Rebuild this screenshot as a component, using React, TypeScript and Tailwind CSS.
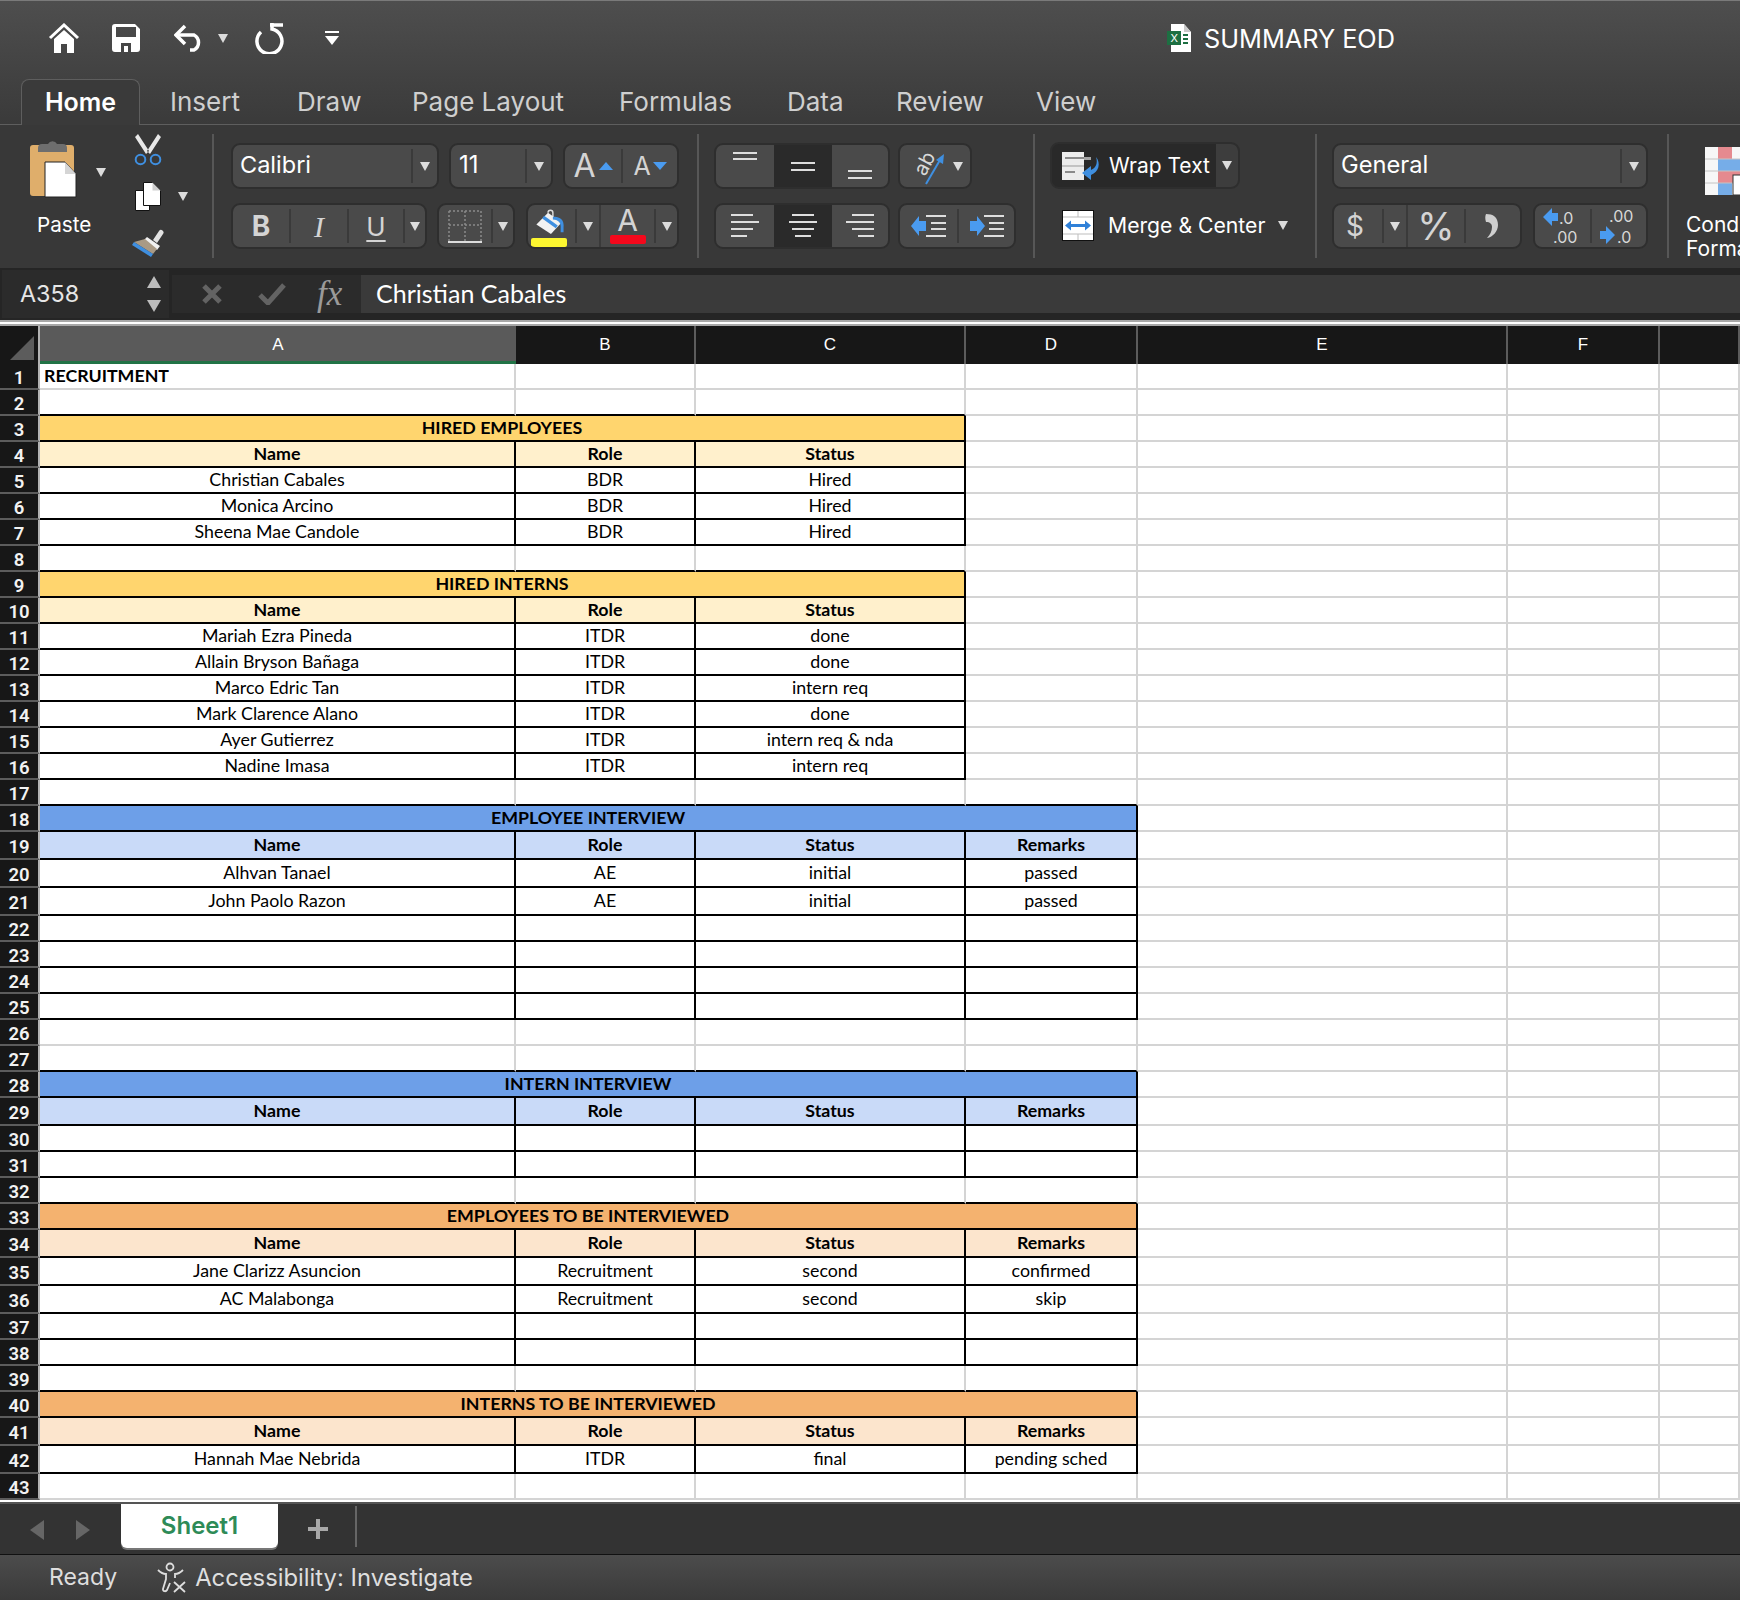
import type { ReactNode } from "react";

const UI = "font-['Inter',sans-serif]";

type Row = {
  n: number;
  tall?: boolean;
  kind: "blank" | "title" | "head" | "body";
  span?: number;
  bg?: string;
  cells?: string[];
  lead?: string;
};

const YELLOW = "bg-[#ffd56e]";
const YELLOW_LT = "bg-[#fff0cc]";
const BLUE = "bg-[#6d9fe8]";
const BLUE_LT = "bg-[#c9daf8]";
const ORANGE = "bg-[#f4b26f]";
const ORANGE_LT = "bg-[#fce5cd]";

const HEAD3 = ["Name", "Role", "Status"];
const HEAD4 = ["Name", "Role", "Status", "Remarks"];
const EMPTY4 = ["", "", "", ""];

const rows: Row[] = [
  { n: 1, kind: "blank", lead: "RECRUITMENT" },
  { n: 2, kind: "blank", span: 3 },
  { n: 3, kind: "title", span: 3, bg: YELLOW, cells: ["HIRED EMPLOYEES"] },
  { n: 4, kind: "head", span: 3, bg: YELLOW_LT, cells: HEAD3 },
  { n: 5, kind: "body", span: 3, cells: ["Christian Cabales", "BDR", "Hired"] },
  { n: 6, kind: "body", span: 3, cells: ["Monica Arcino", "BDR", "Hired"] },
  { n: 7, kind: "body", span: 3, cells: ["Sheena Mae Candole", "BDR", "Hired"] },
  { n: 8, kind: "blank", span: 3 },
  { n: 9, kind: "title", span: 3, bg: YELLOW, cells: ["HIRED INTERNS"] },
  { n: 10, kind: "head", span: 3, bg: YELLOW_LT, cells: HEAD3 },
  { n: 11, kind: "body", span: 3, cells: ["Mariah Ezra Pineda", "ITDR", "done"] },
  { n: 12, kind: "body", span: 3, cells: ["Allain Bryson Bañaga", "ITDR", "done"] },
  { n: 13, kind: "body", span: 3, cells: ["Marco Edric Tan", "ITDR", "intern req"] },
  { n: 14, kind: "body", span: 3, cells: ["Mark Clarence Alano", "ITDR", "done"] },
  { n: 15, kind: "body", span: 3, cells: ["Ayer Gutierrez", "ITDR", "intern req & nda"] },
  { n: 16, kind: "body", span: 3, cells: ["Nadine Imasa", "ITDR", "intern req"] },
  { n: 17, kind: "blank", span: 4 },
  { n: 18, kind: "title", span: 4, bg: BLUE, cells: ["EMPLOYEE INTERVIEW"] },
  { n: 19, tall: true, kind: "head", span: 4, bg: BLUE_LT, cells: HEAD4 },
  { n: 20, tall: true, kind: "body", span: 4, cells: ["Alhvan Tanael", "AE", "initial", "passed"] },
  { n: 21, tall: true, kind: "body", span: 4, cells: ["John Paolo Razon", "AE", "initial", "passed"] },
  { n: 22, kind: "body", span: 4, cells: EMPTY4 },
  { n: 23, kind: "body", span: 4, cells: EMPTY4 },
  { n: 24, kind: "body", span: 4, cells: EMPTY4 },
  { n: 25, kind: "body", span: 4, cells: EMPTY4 },
  { n: 26, kind: "blank" },
  { n: 27, kind: "blank", span: 4 },
  { n: 28, kind: "title", span: 4, bg: BLUE, cells: ["INTERN INTERVIEW"] },
  { n: 29, tall: true, kind: "head", span: 4, bg: BLUE_LT, cells: HEAD4 },
  { n: 30, kind: "body", span: 4, cells: EMPTY4 },
  { n: 31, kind: "body", span: 4, cells: EMPTY4 },
  { n: 32, kind: "blank", span: 4 },
  { n: 33, kind: "title", span: 4, bg: ORANGE, cells: ["EMPLOYEES TO BE INTERVIEWED"] },
  { n: 34, tall: true, kind: "head", span: 4, bg: ORANGE_LT, cells: HEAD4 },
  { n: 35, tall: true, kind: "body", span: 4, cells: ["Jane Clarizz Asuncion", "Recruitment", "second", "confirmed"] },
  { n: 36, tall: true, kind: "body", span: 4, cells: ["AC Malabonga", "Recruitment", "second", "skip"] },
  { n: 37, kind: "body", span: 4, cells: EMPTY4 },
  { n: 38, kind: "body", span: 4, cells: EMPTY4 },
  { n: 39, kind: "blank", span: 4 },
  { n: 40, kind: "title", span: 4, bg: ORANGE, cells: ["INTERNS TO BE INTERVIEWED"] },
  { n: 41, tall: true, kind: "head", span: 4, bg: ORANGE_LT, cells: HEAD4 },
  { n: 42, tall: true, kind: "body", span: 4, cells: ["Hannah Mae Nebrida", "ITDR", "final", "pending sched"] },
  { n: 43, kind: "blank" },
];

const GRID = "grid grid-cols-[40px_476px_180px_270px_172px_370px_152px_80px]";

const Caret = ({ className = "" }: { className?: string }) => (
  <svg width="10" height="9" viewBox="0 0 10 9" className={className}>
    <path d="M0 0h10L5 9z" fill="#dcdcdc" />
  </svg>
);

const Divider = () => <div className="h-[34px] w-[2px] shrink-0 bg-[#3a3a3a]" />;

const Box = ({ className = "", children }: { className?: string; children: ReactNode }) => (
  <div className={`flex h-[46px] shrink-0 items-center overflow-hidden rounded-[9px] border-2 border-[#2e2e2e] bg-[#4a4a4a] ${className}`}>
    {children}
  </div>
);

const Seg = ({ className = "", children }: { className?: string; children?: ReactNode }) => (
  <div className={`flex h-full shrink-0 items-center justify-center ${className}`}>{children}</div>
);

const Separator = () => <div className="mt-[9px] h-[124px] w-[2px] shrink-0 bg-[#575757]" />;

const Lines = ({ items }: { items: [number, number, number][] }) => (
  <svg width="36" height="36" viewBox="0 0 36 36">
    {items.map(([x, y, w], i) => (
      <rect key={i} x={x} y={y} width={w} height="2" fill="#dedede" />
    ))}
  </svg>
);

const HomeIcon = () => (
  <svg width="32" height="30" viewBox="0 0 32 30">
    <path d="M2 15 16 2l14 13" fill="none" stroke="#fff" strokeWidth="3" />
    <path d="M6 16 16 7l10 9v14h-7v-9h-6v9H6z" fill="#fff" />
  </svg>
);

const SaveIcon = () => (
  <svg width="28" height="28" viewBox="0 0 28 28">
    <path fillRule="evenodd" d="M3 0h20l5 5v20a3 3 0 0 1-3 3H3a3 3 0 0 1-3-3V3a3 3 0 0 1 3-3zM4 3v10h20V3zM9 19v9h10v-9zM12 22h4v6h-4z" fill="#fff" />
  </svg>
);

const UndoIcon = () => (
  <svg width="31" height="28" viewBox="0 0 31 28" fill="none" stroke="#fff" strokeWidth="3.500">
    <path d="M11 2 2 11l9 9" />
    <path d="M3 11h17a8.500 8.500 0 0 1 0 15h-4" />
  </svg>
);

const RedoIcon = () => (
  <svg width="30" height="31" viewBox="0 0 30 31" fill="none" stroke="#fff" strokeWidth="3.500">
    <path d="M7 9a12.500 12.500 0 1 0 11-3V0" />
    <path d="M16 2h13" />
  </svg>
);

const CustomizeIcon = () => (
  <svg width="14" height="14" viewBox="0 0 14 14">
    <rect width="14" height="2" fill="#fff" />
    <path d="M0 5h14L7 14z" fill="#fff" />
  </svg>
);

const ExcelFile = () => (
  <svg width="25" height="28" viewBox="0 0 25 28">
    <path d="M4 0h13l7 8v20H4z" fill="#fff" />
    <path d="M17 0v8h7z" fill="#c9c9c9" />
    <rect y="7" width="14" height="14" fill="#1d6f42" />
    <text x="3.500" y="18" fontSize="11" fill="#fff" fontFamily="Inter">X</text>
    <path d="M16 10h5v2h-5zM16 14h5v2h-5zM16 18h5v2h-5z" fill="#1d6f42" />
  </svg>
);

const PasteIcon = () => (
  <svg width="47" height="58" viewBox="0 0 47 58" className="block">
    <rect y="5" width="44" height="51" rx="3" fill="#dfae6b" />
    <path d="M8 8a4 4 0 0 1 4-4h6a5 5 0 0 1 9 0h6a4 4 0 0 1 4 4v4H8z" fill="#6e6e6e" />
    <path d="M15 22h20l11 12v23H15z" fill="#fff" stroke="#222" strokeWidth="1" />
    <path d="M35 22v12h11z" fill="#d5d5d5" />
  </svg>
);

const CutIcon = () => (
  <svg width="28" height="32" viewBox="0 0 28 32" className="block">
    <path d="M4 0 15 17l-3 3L1 3zM24 0 13 17l3 3L27 3z" fill="#e8e8e8" />
    <circle cx="6.500" cy="25.500" r="4.800" fill="none" stroke="#3f8fe0" strokeWidth="2" />
    <circle cx="21.500" cy="25.500" r="4.800" fill="none" stroke="#3f8fe0" strokeWidth="2" />
  </svg>
);

const CopyIcon = () => (
  <svg width="26" height="29" viewBox="0 0 26 29" className="block">
    <path d="M.5 8.500h14v20H.5z" fill="#fff" stroke="#111" />
    <path d="M8.500.5h9l8 8v15h-17z" fill="#fff" stroke="#111" />
    <path d="M17.500.5v8h8z" fill="#cfcfcf" />
  </svg>
);

const BrushIcon = () => (
  <svg width="32" height="28" viewBox="0 0 32 28" className="block">
    <path d="M21 11 27 2a2.500 2.500 0 0 1 4 3l-6 9z" fill="#e2e2e2" />
    <path d="m15 8 13 9-3 4-13-10z" fill="#f1f1f1" />
    <path d="M13 10 25 20l-4 5L2 13z" fill="#a99a85" />
    <path d="M2 13 21 25l-2 3L0 16z" fill="#3f8fe0" />
  </svg>
);

const FillIcon = () => (
  <svg width="36" height="34" viewBox="0 0 36 34">
    <path d="M17 8a2.500 2.500 0 0 1 5 0v6" fill="none" stroke="#dcdcdc" strokeWidth="1.500" />
    <path d="M17 8 31 18 20 30 5 20z" fill="#f2f2f2" />
    <path d="M13 11 27 21l-2 3-14-10z" fill="#3f8fe0" />
    <path d="M22 12c7 0 12 2 11 12v4h-3v-6c0-4-3-7-8-7z" fill="#3f8fe0" />
  </svg>
);

const OrientationIcon = () => (
  <svg width="34" height="40" viewBox="0 0 34 40" className="overflow-visible">
    <text transform="translate(13 31) rotate(-62)" fontSize="20" fill="#d8d8d8" fontFamily="Inter">ab</text>
    <path d="m14 38 14-24" stroke="#3f8fe0" strokeWidth="2" />
    <path d="m32 8-1 10-7-4z" fill="#3f8fe0" />
  </svg>
);

const IndentIcon = ({ dir }: { dir: "left" | "right" }) => (
  <svg width="36" height="30" viewBox="0 0 36 30">
    <path d={dir === "left" ? "M0 15 8 5v5h7v10H8v5z" : "M16 15 8 5v5H1v10h7v5z"} fill="#4a9bf0" />
    <path d="M15 4h20v2H15zM20 11h15v2H20zM20 17h15v2H20zM15 24h20v2H15z" fill="#dedede" />
  </svg>
);

const WrapIcon = () => (
  <svg width="40" height="32" viewBox="0 0 40 32">
    <rect y="2" width="22" height="28" fill="#ececec" />
    <path d="M0 16h22" stroke="#999" strokeWidth="1" />
    <path d="M3 7h20v2H3zM3 21h10v2H3z" fill="#8a8a8a" />
    <rect x="22" y="7" width="7" height="3" fill="#a5a5a5" />
    <path d="M34 7c5 6 3 15-5 18v5l-9-7 9-7v4c5-2 7-7 5-13z" fill="#3f8fe0" />
  </svg>
);

const MergeIcon = () => (
  <svg width="32" height="31" viewBox="0 0 32 31">
    <rect x=".5" y=".5" width="31" height="30" fill="#fff" stroke="#111" />
    <path d="M16 1v6M16 24v6M1 7h30M1 24h30" stroke="#bdbdbd" />
    <path d="m3 15.500 6-5v3.500h14v-3.500l6 5-6 5V17H9v3.500z" fill="#2f80d8" />
  </svg>
);

const DecimalLeft = () => (
  <svg width="44" height="42" viewBox="0 0 44 42" fontFamily="Inter" fontSize="16" fill="#d8d8d8">
    <path d="M2 12 11 3v5h6v8h-6v5z" fill="#4a9bf0" />
    <text x="18" y="19">.0</text>
    <text x="12" y="38">.00</text>
  </svg>
);

const DecimalRight = () => (
  <svg width="44" height="42" viewBox="0 0 44 42" fontFamily="Inter" fontSize="16" fill="#d8d8d8">
    <text x="12" y="17">.00</text>
    <path d="M18 30 9 21v5H3v8h6v5z" fill="#4a9bf0" />
    <text x="20" y="38">.0</text>
  </svg>
);

const CommaIcon = () => (
  <svg width="14" height="26" viewBox="0 0 14 26">
    <path d="M1 1c7 0 12 3 12 11 0 6-5 12-11 13 3-3 5-7 5-11 0-3-2-5-6-5-1-3-1-6 0-8z" fill="#cfcfcf" />
  </svg>
);

const ConditionalIcon = () => (
  <svg width="40" height="48" viewBox="0 0 40 48" className="block">
    <rect width="40" height="48" fill="#f7f7f7" />
    <rect x="13" width="14" height="12" fill="#e58a8f" />
    <rect x="13" y="12" width="27" height="12" fill="#76ade8" />
    <rect x="13" y="24" width="27" height="12" fill="#e58a8f" />
    <rect x="13" y="36" width="14" height="12" fill="#76ade8" />
    <path d="M0 12h40M0 24h40M0 36h40" stroke="#c4c4c4" />
    <rect x="28" y="28" width="12" height="20" fill="#fff" stroke="#333" />
  </svg>
);

const AccessibilityIcon = () => (
  <svg width="30" height="31" viewBox="0 0 30 31" fill="none" stroke="#dedede" strokeWidth="1.800" className="shrink-0">
    <circle cx="13" cy="5" r="3.500" />
    <path d="M1 8c3 3 6 4 8 4v5l-3 10c-.5 2.500 3 3 4 1l3-7" />
    <path d="M26 8c-3 3-6 4-8 4v4" />
    <path d="m17 20 11 10M28 20 17 30" />
  </svg>
);

const Cell = ({ className = "", children }: { className?: string; children?: ReactNode }) => (
  <div className={`flex items-center overflow-hidden border-r-2 border-b-2 text-[17.800px] leading-none text-black ${className}`}>
    {children}
  </div>
);

const SheetRow = ({ row }: { row: Row }) => {
  const h = row.tall ? "h-[28px]" : "h-[26px]";
  const span = row.span ?? 0;
  const rest = [0, 1, 2, 3, 4, 5, 6].slice(row.kind === "blank" ? 0 : span);

  return (
    <div className={`${GRID} ${h}`}>
      <div className="flex items-center justify-center overflow-hidden border-r-2 border-b-2 border-r-[#b4b4b4] border-b-[#5c5c5c] bg-[#171717] pt-[4px] font-['Roboto',sans-serif] text-[18.500px] leading-none font-semibold text-[#f2f2f2]">
        {row.n}
      </div>

      {row.kind === "title" && (
        <Cell className={`justify-center border-black text-[17.200px] font-bold ${row.bg} ${span === 3 ? "col-span-3" : "col-span-4"}`}>
          {row.cells?.[0]}
        </Cell>
      )}

      {(row.kind === "head" || row.kind === "body") &&
        row.cells?.map((c, i) => (
          <Cell
            key={i}
            className={`justify-center border-black ${row.kind === "head" ? `font-bold ${row.bg}` : "bg-white"}`}
          >
            {c}
          </Cell>
        ))}

      {rest.map((i) => {
        const edge = row.kind === "blank" && i < span;
        return (
          <Cell
            key={i}
            className={`border-r-[#d4d4d4] bg-white ${edge ? "border-b-black" : "border-b-[#d4d4d4]"}`}
          >
            {i === 0 && row.lead && <span className="pl-[4px] font-bold">{row.lead}</span>}
          </Cell>
        );
      })}
    </div>
  );
};

const ColHead = ({ label, active }: { label: string; active?: boolean }) => (
  <div
    className={`flex h-[38px] items-center justify-center font-['Liberation_Sans',sans-serif] text-[17px] text-white ${
      active ? "border-b-[3px] border-b-[#217346] bg-[#5a5a5a] pt-[2px]" : "border-r-2 border-r-[#5c5c5c] bg-[#171717]"
    }`}
  >
    {label}
  </div>
);

export default function App() {
  return (
    <div className={`h-[1600px] w-[1740px] overflow-hidden bg-[#383838] ${UI}`}>
      <div className="h-[125px] border-t border-t-[#7a7a7a] bg-gradient-to-b from-[#4e4e4e] to-[#3a3a3a]">
        <div className="flex h-[78px] items-center pl-[48px] pb-[4px]">
          <HomeIcon />
          <div className="ml-[32px]"><SaveIcon /></div>
          <div className="ml-[34px]"><UndoIcon /></div>
          <Caret className="ml-[13px]" />
          <div className="ml-[26px]"><RedoIcon /></div>
          <div className="ml-[41px]"><CustomizeIcon /></div>
          <div className="ml-[828px]"><ExcelFile /></div>
          <span className="ml-[12px] pt-[2px] text-[25.300px] text-white">SUMMARY EOD</span>
        </div>
        <div className="flex h-[46px] border-b border-b-[#5e5e5e] pl-[21px] text-[26px] text-[#cfcfcf]">
          <div className="-mb-px flex w-[119px] items-center justify-center rounded-t-lg border border-b-0 border-[#5e5e5e] bg-[#3a3a3a] text-[25px] font-semibold text-white">Home</div>
          <div className="ml-[30px] flex w-[127px] items-center">Insert</div>
          <div className="flex w-[115px] items-center">Draw</div>
          <div className="flex w-[207px] items-center">Page Layout</div>
          <div className="flex w-[168px] items-center">Formulas</div>
          <div className="flex w-[109px] items-center">Data</div>
          <div className="flex w-[140px] items-center">Review</div>
          <div className="flex items-center">View</div>
        </div>
      </div>

      <div className="flex h-[143px] items-start bg-[#383838] text-[#d4d4d4]">
        <div className="flex w-[212px] shrink-0">
          <div className="ml-[30px] w-[66px] pt-[15px]">
            <PasteIcon />
            <div className="mt-[14px] ml-[7px] text-[20.700px] leading-[26px] text-white">Paste</div>
          </div>
          <Caret className="mt-[43px]" />
          <div className="ml-[26px] flex flex-col pt-[9px]">
            <div className="ml-[2px]"><CutIcon /></div>
            <div className="mt-[16px] ml-[3px] flex">
              <CopyIcon />
              <Caret className="mt-[10px] ml-[17px]" />
            </div>
            <div className="mt-[18px]"><BrushIcon /></div>
          </div>
        </div>
        <Separator />

        <div className="flex w-[483px] shrink-0 flex-col gap-[14px] pt-[18px] pl-[17px]">
          <div className="flex gap-[10px]">
            <Box className="w-[208px]">
              <Seg className="w-[178px] justify-start pb-[2px] pl-[7px] text-[23.500px] text-white">Calibri</Seg>
              <Divider />
              <Seg className="w-[24px]"><Caret /></Seg>
            </Box>
            <Box className="w-[104px]">
              <Seg className="w-[74px] justify-start pb-[2px] pl-[8px] text-[24px] text-white">11</Seg>
              <Divider />
              <Seg className="w-[24px]"><Caret /></Seg>
            </Box>
            <Box className="w-[116px]">
              <Seg className="w-[56px] gap-[3px] text-[32px] leading-none">
                A
                <svg width="14" height="8" viewBox="0 0 14 8"><path d="M0 8 7 0l7 8z" fill="#4a9bf0" /></svg>
              </Seg>
              <Divider />
              <Seg className="w-[54px] gap-[2px] text-[25px] leading-none">
                A
                <svg width="14" height="8" viewBox="0 0 14 8"><path d="M0 0h14L7 8z" fill="#4a9bf0" /></svg>
              </Seg>
            </Box>
          </div>
          <div className="flex">
            <Box className="w-[196px]">
              <Seg className="w-[56px] text-[28px] font-bold">B</Seg>
              <Divider />
              <Seg className="w-[56px] font-['Liberation_Serif',serif] text-[30px] italic">I</Seg>
              <Divider />
              <Seg className="w-[54px] text-[26px] underline underline-offset-[4px]">U</Seg>
              <Divider />
              <Seg className="w-[20px]"><Caret /></Seg>
            </Box>
            <Box className="ml-[10px] w-[78px]">
              <Seg className="w-[52px]">
                <svg width="34" height="34" viewBox="0 0 34 34" fill="none">
                  <path d="M1 2h32M1 16h32M1 2v30M17 2v30M33 2v30" stroke="#8b8b8b" strokeWidth="1.500" strokeDasharray="2 2" />
                  <path d="M0 33h34" stroke="#dcdcdc" strokeWidth="2" />
                </svg>
              </Seg>
              <Divider />
              <Seg className="w-[20px]"><Caret /></Seg>
            </Box>
            <Box className="ml-[11px] w-[153px]">
              <Seg className="w-[47px] flex-col pr-[6px]">
                <FillIcon />
                <div className="h-[9px] w-[36px] shrink-0 rounded-[2px] bg-[#fdf730]" />
              </Seg>
              <Divider />
              <Seg className="w-[22px]"><Caret /></Seg>
              <div className="h-full w-[2px] bg-[#3a3a3a]" />
              <Seg className="w-[53px] flex-col pb-[3px] text-[30px] leading-[30px]">
                A
                <div className="h-[9px] w-[36px] rounded-[2px] bg-[#f5081c]" />
              </Seg>
              <Divider />
              <Seg className="w-[21px]"><Caret /></Seg>
            </Box>
          </div>
        </div>
        <Separator />

        <div className="flex w-[334px] shrink-0 flex-col gap-[14px] pt-[18px] pl-[15px]">
          <div className="flex gap-[8px]">
            <Box className="w-[176px]">
              <Seg className="w-[58px]"><Lines items={[[6, 4, 24], [6, 10, 24]]} /></Seg>
              <Seg className="w-[58px] bg-[#2a2a2a]"><Lines items={[[6, 14, 24], [6, 21, 24]]} /></Seg>
              <Seg className="w-[56px]"><Lines items={[[6, 22, 24], [6, 29, 24]]} /></Seg>
            </Box>
            <Box className="w-[74px]">
              <Seg className="w-[46px] justify-end"><OrientationIcon /></Seg>
              <Seg className="w-[24px]"><Caret /></Seg>
            </Box>
          </div>
          <div className="flex gap-[8px]">
            <Box className="w-[176px]">
              <Seg className="w-[58px]"><Lines items={[[4, 6, 22], [4, 13, 28], [4, 20, 22], [4, 27, 16]]} /></Seg>
              <Seg className="w-[58px] bg-[#2a2a2a]"><Lines items={[[7, 6, 22], [4, 13, 28], [7, 20, 22], [10, 27, 16]]} /></Seg>
              <Seg className="w-[56px]"><Lines items={[[10, 6, 22], [4, 13, 28], [10, 20, 22], [16, 27, 16]]} /></Seg>
            </Box>
            <Box className="w-[118px]">
              <Seg className="w-[57px]"><IndentIcon dir="left" /></Seg>
              <Divider />
              <Seg className="w-[55px]"><IndentIcon dir="right" /></Seg>
            </Box>
          </div>
        </div>
        <Separator />

        <div className="flex w-[280px] shrink-0 flex-col pt-[17px] pl-[15px] text-[21px] text-white">
          <div className="flex h-[47px] w-[190px] overflow-hidden rounded-[9px] border-2 border-[#2e2e2e] bg-[#292929]">
            <div className="flex w-[164px] items-center gap-[7px] pl-[10px]">
              <WrapIcon />
              <span>Wrap Text</span>
            </div>
            <div className="flex flex-1 items-center justify-center bg-[#3d3d3d]"><Caret /></div>
          </div>
          <div className="mt-[20px] flex h-[33px] items-center pl-[12px]">
            <MergeIcon />
            <span className="ml-[14px] text-[21.200px]">Merge &amp; Center</span>
            <Caret className="ml-[13px]" />
          </div>
        </div>
        <Separator />

        <div className="flex w-[350px] shrink-0 flex-col gap-[14px] pt-[18px] pl-[15px]">
          <Box className="w-[316px]">
            <Seg className="w-[286px] justify-start pb-[2px] pl-[7px] text-[23.700px] text-white">General</Seg>
            <Divider />
            <Seg className="w-[24px]"><Caret /></Seg>
          </Box>
          <div className="flex">
            <Box className="w-[190px]">
              <Seg className="w-[48px] pr-[6px] text-[28px]">$</Seg>
              <Divider />
              <Seg className="w-[22px]"><Caret /></Seg>
              <div className="h-full w-[2px] bg-[#3a3a3a]" />
              <Seg className="w-[56px] text-[38px]">%</Seg>
              <Divider />
              <Seg className="w-[52px]"><CommaIcon /></Seg>
            </Box>
            <Box className="ml-[11px] w-[115px]">
              <Seg className="w-[55px]"><DecimalLeft /></Seg>
              <Divider />
              <Seg className="w-[54px]"><DecimalRight /></Seg>
            </Box>
          </div>
        </div>
        <Separator />

        <div className="shrink-0 whitespace-nowrap pt-[22px] pl-[36px] text-[21px] leading-[24px] text-white">
          <ConditionalIcon />
          <div className="-ml-[19px] mt-[18px]">Conditional</div>
          <div className="-ml-[19px]">Formatting</div>
        </div>
      </div>

      <div className="flex h-[52px] items-center bg-[#252525]">
        <div className="ml-[2px] flex h-[48px] w-[167px] items-center justify-between bg-[#2b2b2b] pr-[8px] pl-[18px] text-[23.300px] text-[#e6e6e6]">
          A358
          <div className="flex flex-col gap-[12px]">
            <svg width="14" height="12" viewBox="0 0 14 12"><path d="M0 12 7 0l7 12z" fill="#bdbdbd" /></svg>
            <svg width="14" height="12" viewBox="0 0 14 12"><path d="M0 0h14L7 12z" fill="#bdbdbd" /></svg>
          </div>
        </div>
        <div className="ml-[3px] flex h-[38px] w-[189px] items-center bg-[#2b2b2b] pl-[29px]">
          <svg width="22" height="20" viewBox="0 0 22 20"><path d="M3 2 19 18M19 2 3 18" stroke="#636363" strokeWidth="5" /></svg>
          <svg width="28" height="22" viewBox="0 0 28 22" className="ml-[35px]"><path d="M2 12l8 8L26 2" fill="none" stroke="#636363" strokeWidth="5" /></svg>
          <span className="ml-[31px] font-['Liberation_Serif',serif] text-[35px] italic text-[#9a9a9a]">fx</span>
        </div>
        <div className="flex h-[38px] flex-1 items-center bg-[#3a3a3a] pl-[15px] font-['Lato',sans-serif] text-[25px] text-white">
          Christian Cabales
        </div>
      </div>

      <div className="h-[6px] border-y-2 border-y-[#a8a8a8] bg-white" />

      <div className="h-[1176px] overflow-hidden bg-white font-['Lato',sans-serif]">
        <div className={GRID}>
          <div className="flex h-[38px] items-end justify-end border-r-2 border-r-[#b4b4b4] bg-[#171717] pr-[4px] pb-[4px]">
            <svg width="24" height="24" viewBox="0 0 24 24"><path d="M24 0v24H0z" fill="#5c5c5c" /></svg>
          </div>
          <ColHead label="A" active />
          <ColHead label="B" />
          <ColHead label="C" />
          <ColHead label="D" />
          <ColHead label="E" />
          <ColHead label="F" />
          <ColHead label="" />
        </div>
        {rows.map((row) => (
          <SheetRow key={row.n} row={row} />
        ))}
      </div>

      <div className="flex h-[53px] border-t-2 border-t-[#555] border-b border-b-[#111] bg-[#333]">
        <svg width="14" height="20" viewBox="0 0 14 20" className="mt-[16px] ml-[30px]"><path d="M14 0v20L0 10z" fill="#666" /></svg>
        <svg width="14" height="20" viewBox="0 0 14 20" className="mt-[16px] ml-[32px]"><path d="M0 0v20l14-10z" fill="#666" /></svg>
        <div className="ml-[31px] flex h-[44px] w-[157px] items-center justify-center rounded-b-[6px] bg-white text-[24px] font-semibold text-[#2e8b57] shadow-[0_2px_0_#777]">
          Sheet1
        </div>
        <svg width="20" height="20" viewBox="0 0 20 20" className="mt-[15px] ml-[30px]"><path d="M8 0h4v8h8v4h-8v8H8v-8H0V8h8z" fill="#a8a8a8" /></svg>
        <div className="mt-[2px] ml-[27px] h-[41px] w-[2px] bg-[#666]" />
      </div>

      <div className="flex h-[45px] items-center bg-gradient-to-b from-[#4c4c4c] to-[#3a3a3a] pl-[49px] text-[23px] text-[#dedede]">
        <span>Ready</span>
        <div className="ml-[40px]"><AccessibilityIcon /></div>
        <span className="ml-[8px] text-[23.800px]">Accessibility: Investigate</span>
      </div>
    </div>
  );
}
